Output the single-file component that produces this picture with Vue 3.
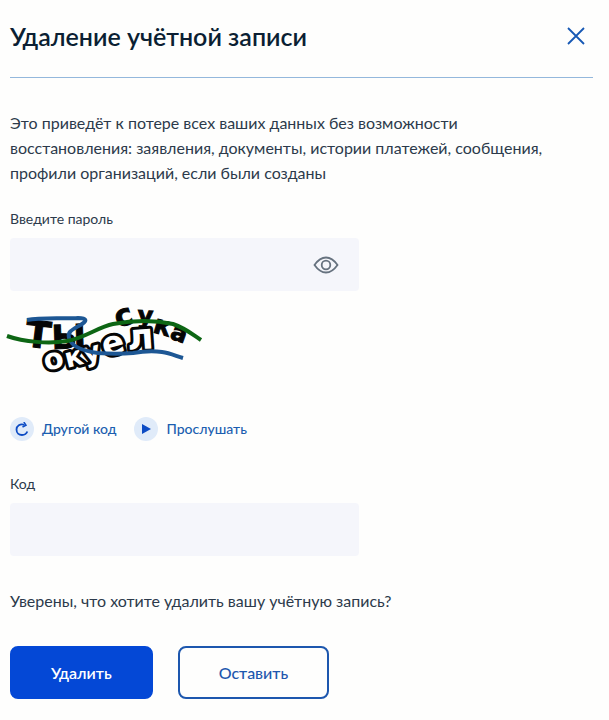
<!-- src/App.vue -->
<script setup>
import { ref } from 'vue';

const password = ref('');
const code = ref('');
const showPassword = ref(false);

// Hand-drawn captcha letters, each with its own tilt
const solidLetters = [
  { char: 'Т', x: 14, y: 41, size: 37, angle: 7 },
  { char: 'Ы', x: 42, y: 44, size: 33, angle: -2 },
  { char: 'с', x: 108, y: 23, size: 30, angle: -18 },
  { char: 'у', x: 127, y: 18, size: 24, angle: 4 },
  { char: 'к', x: 142, y: 27, size: 26, angle: 16 },
  { char: 'а', x: 159, y: 33, size: 24, angle: 20 }
];

const outlinedLetters = [
  { char: 'о', x: 36, y: 66, size: 29, angle: -14 },
  { char: 'к', x: 57, y: 63, size: 27, angle: -14 },
  { char: 'у', x: 75, y: 58, size: 27, angle: -14 },
  { char: 'е', x: 95, y: 52, size: 33, angle: -16 },
  { char: 'л', x: 118, y: 45, size: 36, angle: -4 }
];

const rotate = (letter) => `rotate(${letter.angle} ${letter.x} ${letter.y})`;
</script>

<template>
  <main class="dialog">
    <header class="dialog-header">
      <h1>Удаление учётной записи</h1>
      <button type="button" class="close-btn" aria-label="Закрыть">
        <svg width="18" height="18" viewBox="0 0 18 18" fill="none" stroke="currentColor" stroke-width="1.8">
          <path d="M1 1L17 17M17 1L1 17" />
        </svg>
      </button>
    </header>

    <form @submit.prevent>
      <p class="warning">
        Это приведёт к потере всех ваших данных без возможности восстановления: заявления,
        документы, истории платежей, сообщения, профили организаций, если были созданы
      </p>

      <label for="password">Введите пароль</label>
      <div class="field">
        <input id="password" v-model="password" :type="showPassword ? 'text' : 'password'" />
        <button type="button" class="eye-btn" aria-label="Показать пароль" @click="showPassword = !showPassword">
          <svg width="26" height="18" viewBox="0 0 26 18" fill="none" stroke="currentColor" stroke-width="1.8">
            <path d="M1.500 9C5 4 8.500 1.500 13 1.500S21 4 24.500 9C21 14 17.500 16.500 13 16.500S5 14 1.500 9Z" />
            <circle cx="13" cy="9" r="4.300" />
          </svg>
        </button>
      </div>

      <svg class="captcha" width="192" height="74" viewBox="0 0 192 74" role="img" aria-label="Код с картинки">
        <g class="solid">
          <text
            v-for="letter in solidLetters"
            :key="letter.x"
            :x="letter.x"
            :y="letter.y"
            :font-size="letter.size"
            :transform="rotate(letter)"
          >{{ letter.char }}</text>
        </g>
        <g class="outlined">
          <text
            v-for="letter in outlinedLetters"
            :key="letter.x"
            :x="letter.x"
            :y="letter.y"
            :font-size="letter.size"
            :transform="rotate(letter)"
          >{{ letter.char }}</text>
        </g>
        <path
          class="scribble blue"
          d="M17 15C32 12 55 14 68 13C77 13 77 16 72 19C64 24 57 26 59 33C62 43 75 46 88 48C101 49 111 49 123 48C135 46 144 46 152 47C160 48 166 51 173 53"
        />
        <path
          class="scribble green"
          d="M-3 31C14 37 39 39 57 36C75 33 88 22 103 19C124 15 145 15 163 19C175 23 182 29 191 35"
        />
      </svg>

      <div class="captcha-actions">
        <button type="button" class="link-btn">
          <span class="circle">
            <svg width="14" height="14" viewBox="0 0 14 14" fill="none" stroke="currentColor" stroke-width="1.8">
              <path d="M9.500 2.800C5 1.200 1.500 4 1.500 7.500C1.500 10.800 4 13 7 13C9.500 13 11.500 11.600 12.300 9.500" />
              <path d="M8.800 0L11 3.200L7.500 5" stroke-width="1.500" />
            </svg>
          </span>
          Другой код
        </button>
        <button type="button" class="link-btn">
          <span class="circle">
            <svg width="14" height="14" viewBox="0 0 14 14" fill="currentColor">
              <path d="M3 2L12 7L3 12Z" />
            </svg>
          </span>
          Прослушать
        </button>
      </div>

      <label for="code">Код</label>
      <div class="field">
        <input id="code" v-model="code" type="text" autocomplete="off" />
      </div>

      <p class="confirm">Уверены, что хотите удалить вашу учётную запись?</p>

      <div class="actions">
        <button type="submit" class="btn btn-primary">Удалить</button>
        <button type="button" class="btn btn-outline">Оставить</button>
      </div>
    </form>
  </main>
</template>

<style>
body {
  margin: 0;
  background-color: #fefefd;
}
</style>

<style scoped>
.dialog {
  box-sizing: border-box;
  padding: 16px 16px 20px 10px;
  font-family: Lato, "Liberation Sans", sans-serif;
  color: #2c3a4b;
}

.dialog-header {
  display: flex;
  align-items: center;
  justify-content: space-between;
  padding: 0 8px 21px 0;
  border-bottom: 1px solid #94b8dc;
}

h1 {
  margin: 0;
  font-size: 25px;
  line-height: 40px;
  font-weight: 600;
  color: #0b1f33;
}

button {
  padding: 0;
  border: 0;
  background: none;
  font-family: inherit;
  cursor: pointer;
}

.close-btn {
  display: flex;
  color: #1658b4;
}

.warning {
  margin: 32px 0 24px;
  max-width: 560px;
  font-size: 16px;
  line-height: 25px;
}

label {
  display: block;
  margin-bottom: 9px;
  font-size: 14px;
  line-height: 20px;
}

.field {
  display: flex;
  align-items: center;
  box-sizing: border-box;
  width: 100%;
  max-width: 349px;
  height: 53px;
  padding: 0 20px;
  border-radius: 4px;
  background-color: #f5f6fb;
}

.field input {
  flex: 1;
  min-width: 0;
  height: 100%;
  padding: 0;
  border: 0;
  outline: none;
  background: transparent;
  font-family: inherit;
  font-size: 16px;
  color: inherit;
}

.eye-btn {
  display: flex;
  color: #66727f;
}

.captcha {
  display: block;
  margin-top: 14px;
  overflow: visible;
  font-family: "DejaVu Sans", sans-serif;
  font-weight: bold;
}

.solid {
  fill: #050505;
  stroke: #050505;
  stroke-width: 1;
}

.outlined {
  fill: #fff;
  stroke: #050505;
  stroke-width: 6;
  stroke-linejoin: round;
  paint-order: stroke;
}

.scribble {
  fill: none;
  stroke-width: 4;
}

.blue {
  stroke: #1d5794;
}

.green {
  stroke: #0d6614;
}

.captcha-actions {
  display: flex;
  flex-wrap: wrap;
  gap: 18px;
  margin: 38px 0 33px;
}

.link-btn {
  display: flex;
  align-items: center;
  gap: 8px;
  font-size: 14px;
  line-height: 24px;
  font-weight: 500;
  color: #1b5eb0;
}

.circle {
  display: flex;
  align-items: center;
  justify-content: center;
  width: 24px;
  height: 24px;
  border-radius: 50%;
  background-color: #e0ebf9;
  color: #0d4cc4;
}

.confirm {
  margin: 32px 0 33px;
  font-size: 16px;
  line-height: 25px;
}

.actions {
  display: flex;
  flex-wrap: wrap;
  gap: 25px;
}

.btn {
  height: 53px;
  padding: 0 39px;
  border: 2px solid #0448d6;
  border-radius: 8px;
  font-size: 16px;
  line-height: 24px;
  font-weight: 500;
}

.btn-primary {
  background-color: #0448d6;
  color: #fff;
  font-weight: 600;
}

.btn-outline {
  border-color: #1d57ae;
  color: #1d57ae;
}
</style>
